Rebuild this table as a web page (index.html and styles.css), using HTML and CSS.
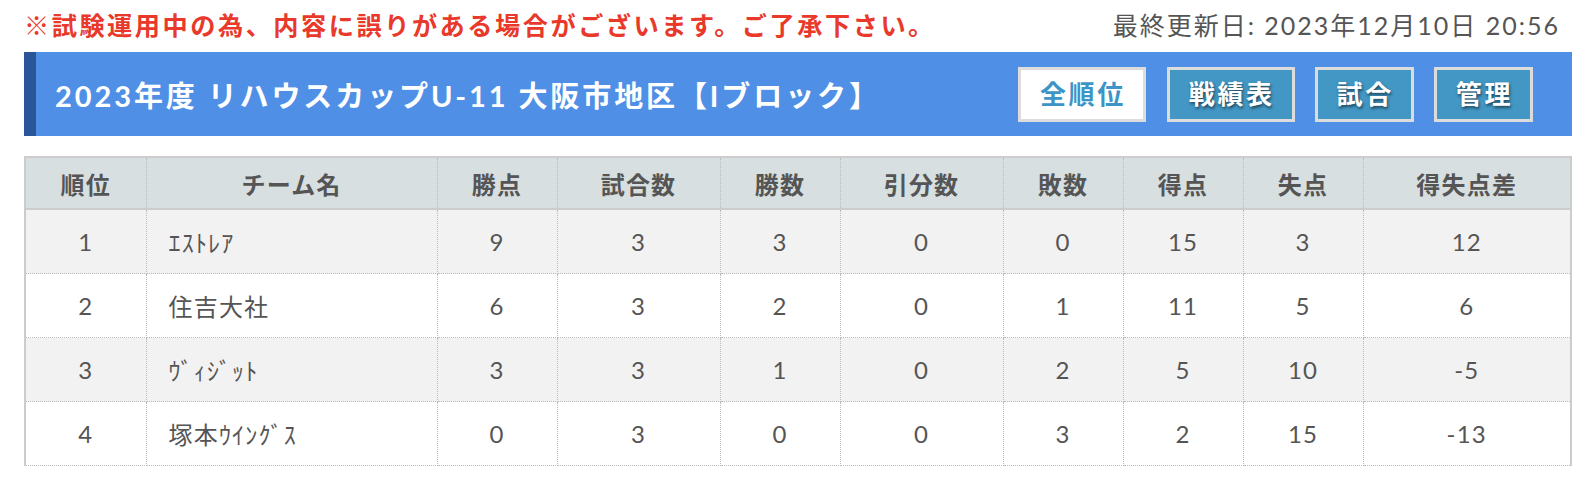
FILE: index.html
```html
<!DOCTYPE html>
<html lang="ja">
<head>
<meta charset="utf-8">
<title>順位表</title>
<link rel="stylesheet" href="styles.css">
</head>
<body>
<div class="page">
  <div class="topline">
    <p class="notice">※試験運用中の為、内容に誤りがある場合がございます。ご了承下さい。</p>
    <p class="updated">最終更新日: 2023年12月10日 20:56</p>
  </div>
  <div class="titlebar">
    <h1 class="title">2023年度 リハウスカップU-11 大阪市地区【Iブロック】</h1>
    <nav class="tabs">
      <a class="tab active">全順位</a>
      <a class="tab">戦績表</a>
      <a class="tab">試合</a>
      <a class="tab">管理</a>
    </nav>
  </div>
  <table class="standings">
    <colgroup>
      <col class="c-rank"><col class="c-name"><col class="c-s"><col class="c-m"><col class="c-s"><col class="c-m"><col class="c-s"><col class="c-s"><col class="c-s"><col class="c-l">
    </colgroup>
    <thead>
      <tr><th>順位</th><th>チーム名</th><th>勝点</th><th>試合数</th><th>勝数</th><th>引分数</th><th>敗数</th><th>得点</th><th>失点</th><th>得失点差</th></tr>
    </thead>
    <tbody>
      <tr><td>1</td><td class="name">ｴｽﾄﾚｱ</td><td>9</td><td>3</td><td>3</td><td>0</td><td>0</td><td>15</td><td>3</td><td>12</td></tr>
      <tr><td>2</td><td class="name">住吉大社</td><td>6</td><td>3</td><td>2</td><td>0</td><td>1</td><td>11</td><td>5</td><td>6</td></tr>
      <tr><td>3</td><td class="name">ｳﾞｨｼﾞｯﾄ</td><td>3</td><td>3</td><td>1</td><td>0</td><td>2</td><td>5</td><td>10</td><td>-5</td></tr>
      <tr><td>4</td><td class="name">塚本ｳｲﾝｸﾞｽ</td><td>0</td><td>3</td><td>0</td><td>0</td><td>3</td><td>2</td><td>15</td><td>-13</td></tr>
    </tbody>
  </table>
</div>
</body>
</html>
```
FILE: styles.css
```css
body {
  margin: 0;
  background: #fff;
  color: #555;
  font-family: Lato, "Noto Sans CJK JP", sans-serif;
}
.page {
  margin: 0 14px 0 24px;
}
.topline {
  display: flex;
  justify-content: space-between;
  align-items: center;
  height: 48px;
  margin-bottom: 4px;
}
.notice {
  margin: 0;
  color: #e8392b;
  font-weight: 700;
  font-size: 25.2px;
  letter-spacing: 0.1em;
}
.updated {
  margin: 0 12px 0 0;
  font-size: 25px;
  letter-spacing: 0.08em;
  color: #555;
}
.titlebar {
  display: flex;
  align-items: center;
  justify-content: space-between;
  box-sizing: border-box;
  height: 84px;
  background: #508fe6;
  border-left: 12px solid #2a5599;
  padding: 0 39px 0 19px;
}
.title {
  margin: 0;
  color: #fff;
  font-size: 29px;
  font-weight: 700;
  letter-spacing: 0.1em;
}
.tabs {
  display: flex;
  gap: 20px;
}
.tab {
  display: block;
  box-sizing: border-box;
  height: 55px;
  border: 3px solid #dcdcdc;
  background: #4297c4;
  color: #fff;
  font-size: 26px;
  font-weight: 700;
  letter-spacing: 0.1em;
  line-height: 49px;
  padding: 0 17px 0 19px;
  text-shadow: 1px 2px 3px rgba(0, 0, 0, 0.55);
}
.tab.active {
  background: #fff;
  color: #3d94c6;
  text-shadow: none;
  margin-right: 1px;
}
.standings {
  margin-top: 20px;
  width: 100%;
  table-layout: fixed;
  border-collapse: collapse;
  border-top: 2px solid #ccc;
  border-left: 2px solid #ccc;
  border-right: 2px solid #ccc;
}
.c-rank { width: 121px; }
.c-name { width: 291px; }
.c-s { width: 120px; }
.c-m { width: 163px; }
.c-l { width: 208px; }
.standings th,
.standings td {
  border: 1px dotted #bbb;
  padding: 0;
  text-align: center;
}
.standings th {
  background: #d7dfe0;
  height: 50px;
  font-size: 24px;
  font-weight: 700;
  letter-spacing: 0.05em;
  border-bottom: 2px solid #ccc;
}
.standings td {
  height: 63px;
  font-size: 24px;
  letter-spacing: 0.05em;
}
.standings tbody tr:nth-child(odd) {
  background: #f2f2f2;
}
.standings td.name {
  text-align: left;
  padding-left: 22px;
}
```
